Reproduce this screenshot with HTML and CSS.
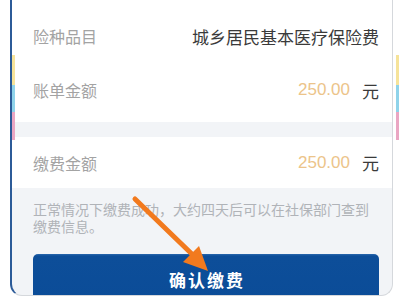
FILE: index.html
```html
<!DOCTYPE html>
<html lang="zh">
<head>
<meta charset="utf-8">
<link rel="stylesheet" href="styles.css">
</head>
<body>
<div class="stage">
  <div class="strips strips-left"><i class="s-y"></i><i class="s-c"></i><i class="s-p"></i></div>
  <div class="strips strips-right"><i class="s-y"></i><i class="s-c"></i><i class="s-p"></i></div>
  <div class="frame">
    <div class="card card-top">
      <div class="row"><span class="label">险种品目</span><span class="value">城乡居民基本医疗保险费</span></div>
      <div class="row"><span class="label">账单金额</span><span class="value"><span class="amount">250.00</span><span class="unit">元</span></span></div>
    </div>
    <div class="card card-pay">
      <div class="row"><span class="label">缴费金额</span><span class="value"><span class="amount">250.00</span><span class="unit">元</span></span></div>
    </div>
    <p class="note">正常情况下缴费成功，大约四天后可以在社保部门查到缴费信息。</p>
    <div class="btn">确认缴费</div>
  </div>
  <svg class="arrow" width="400" height="300" viewBox="0 0 400 300">
    <line x1="135" y1="199" x2="196" y2="258" stroke="#f27a1e" stroke-width="5" stroke-linecap="round"/>
    <polygon points="208,271 183,262 199,246" fill="#f27a1e"/>
  </svg>
</div>
</body>
</html>
```
FILE: styles.css
```css
html, body {
  margin: 0;
  padding: 0;
  background: #ffffff;
}
body {
  font-family: "Noto Sans CJK SC", "Noto Sans", sans-serif;
}
.stage {
  position: relative;
  width: 400px;
  height: 300px;
  overflow: hidden;
}
.frame {
  margin-left: 10px;
  width: 380px;
  height: 295px;
  border-left: 2px solid #2c5b98;
  border-right: 1px solid #d5d8dc;
  border-bottom: 1px solid #d5d8dc;
  border-radius: 0 0 12px 12px;
  background: #f2f4f7;
  overflow: hidden;
  display: flex;
  flex-direction: column;
}
.card {
  background: #ffffff;
  padding: 0 13px 0 21px;
}
.card-top {
  padding-top: 9px;
  padding-bottom: 5px;
}
.card-pay {
  margin-top: 15px;
}
.row {
  display: flex;
  align-items: center;
  justify-content: space-between;
  height: 54px;
}
.card-pay .row {
  height: 51px;
}
.label {
  font-size: 16px;
  color: #a3a3a3;
}
.value {
  font-size: 17px;
  color: #3a3a3a;
  display: flex;
  align-items: center;
}
.amount {
  color: #ecc48a;
  font-family: "Liberation Sans", "Noto Sans", sans-serif;
  font-size: 17px;
  margin-right: 12px;
}
.unit {
  font-size: 17px;
  color: #3a3a3a;
}
.note {
  margin: 13px 13px 0 21px;
  font-size: 14px;
  line-height: 17px;
  color: #b0b3b8;
}
.btn {
  margin: 19px 13px 0 21px;
  height: 50px;
  border-radius: 5px;
  background: linear-gradient(#2b68ad 0, #0d4e99 2px, #0b4c98 100%);
  color: #ffffff;
  font-size: 17px;
  font-weight: bold;
  letter-spacing: 2px;
  text-indent: 2px;
  display: flex;
  align-items: center;
  justify-content: center;
  flex-shrink: 0;
}
.strips {
  position: absolute;
  top: 55px;
  width: 3px;
  display: flex;
  flex-direction: column;
}
.strips-left { left: 12px; }
.strips-right { left: 396px; }
.strips i { display: block; width: 3px; }
.s-y { height: 30px; background: #f6e39a; }
.s-c { height: 27px; background: #8fd3ea; }
.s-p { height: 28px; background: #eaa6c3; }
.arrow {
  position: absolute;
  left: 0;
  top: 0;
  pointer-events: none;
}
```
